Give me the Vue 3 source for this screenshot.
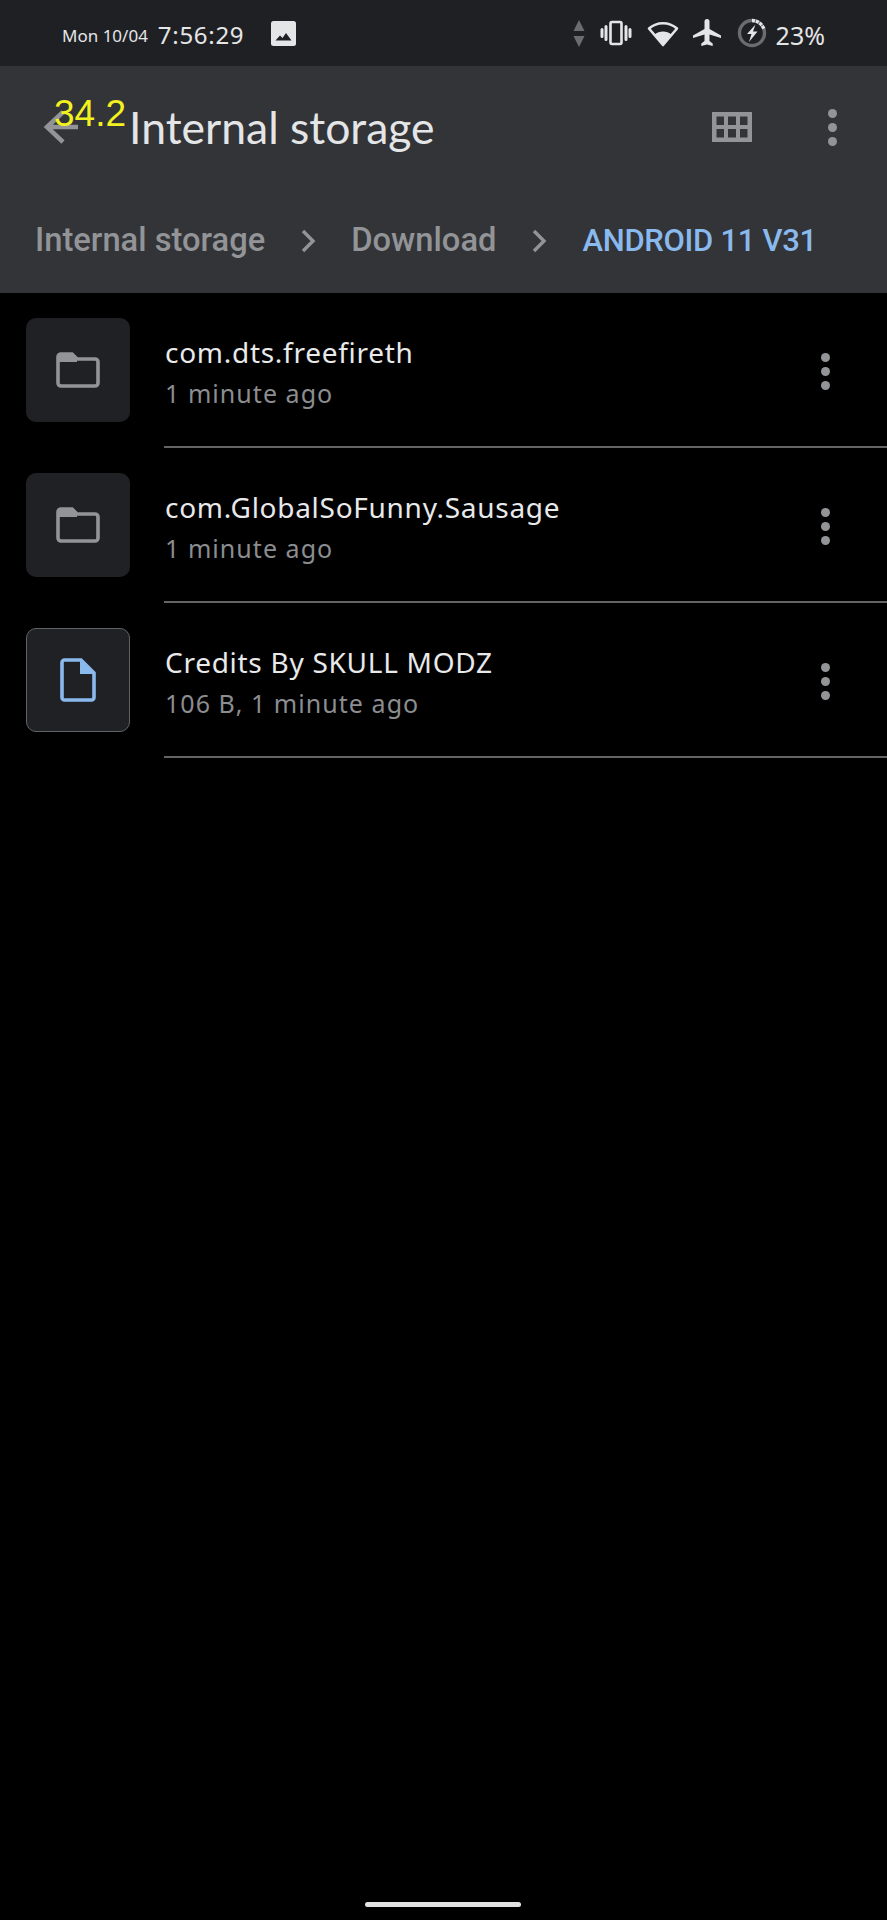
<template>
  <div class="screen">
    <div class="status-bar">
      <div class="status-left">
        <span class="date">Mon 10/04</span>
        <span class="clock">7:56:29</span>
        <svg class="pic" viewBox="0 0 25 25" width="25" height="25">
          <rect width="25" height="25" rx="2.5" fill="#e4e5e7" />
          <path d="M4.5 19.5l4.5-5 2.5 2.5 3.5-5 5.5 7.5z" fill="#1f2024" />
        </svg>
      </div>
      <div class="status-right">
        <svg class="updown" viewBox="0 0 12 27" width="12" height="27">
          <path d="M6 0l5.5 11H.5zM6 27L.5 16h11z" fill="#6a6c70" />
        </svg>
        <svg class="vibrate" viewBox="0 0 32 26" width="32" height="26">
          <rect x="10.5" y="2" width="11" height="22" rx="1.5" fill="none" stroke="#e4e5e7" stroke-width="2.6" />
          <path d="M6 6.5v13M2 9.5v7M26 6.5v13M30 9.5v7" stroke="#e4e5e7" stroke-width="3" stroke-linecap="round" />
        </svg>
        <svg class="wifi" viewBox="0 0 32 28" width="32" height="28">
          <path d="M16 26L2 9.5C10 2.5 22 2.5 30 9.5z" fill="none" stroke="#e4e5e7" stroke-width="2.6" stroke-linejoin="round" />
          <path d="M16 26L7.5 15.5C12 11.5 20 11.5 24.5 15.5z" fill="#e4e5e7" />
        </svg>
        <svg viewBox="0 0 28 28" width="28" height="28">
          <path d="M28 19v-2.6L16.5 10V2.500a2.500 2.500 0 0 0-5 0V10L0 16.400V19l11.500-3.400V22l-3.200 2.400V27l5.700-1.600 5.700 1.600v-2.600L16.500 22v-6.400z" fill="#e4e5e7" />
        </svg>
        <svg viewBox="0 0 30 30" width="30" height="30">
          <circle cx="15" cy="15" r="12.5" fill="none" stroke="#6a6c70" stroke-width="3.4" />
          <path d="M15 2.5A12.5 12.5 0 0 1 27 11.5" fill="none" stroke="#e4e5e7" stroke-width="3.4" stroke-dasharray="3 1" />
          <path d="M18.500 6.500l-8.500 9.500h4.500l-2.500 8 8.500-10.500h-4.500z" fill="#e4e5e7" />
        </svg>
        <span class="battery">23%</span>
      </div>
    </div>

    <header class="toolbar">
      <div class="toolbar-top">
        <svg class="back" viewBox="0 0 36 36" width="36" height="36">
          <path d="M21 3L5 18l16 15M5 18h31" fill="none" stroke="#929497" stroke-width="4.500" />
        </svg>
        <h1>Internal storage</h1>
        <span class="fps">34.2</span>
        <svg class="grid-icon" viewBox="0 0 40 30" width="40" height="30">
          <path fill-rule="evenodd" d="M0 0h40v30H0zM4.500 4.500v8.500h7.500V4.500zm11.500 0v8.500h8V4.500zm12 0v8.500h7.500V4.500zM4.500 17v8.500h7.500V17zm11.500 0v8.500h8V17zm12 0v8.500h7.500V17z" fill="#929497" />
        </svg>
        <span class="dots big"><i></i><i></i><i></i></span>
      </div>
      <nav class="crumbs">
        <template v-for="(crumb, i) in crumbs" :key="crumb">
          <svg v-if="i" class="chevron" viewBox="0 0 16 24" width="16" height="24">
            <path d="M3 2l10 10L3 22" fill="none" stroke="#929497" stroke-width="3.400" />
          </svg>
          <span :class="{ current: i === crumbs.length - 1 }">{{ crumb }}</span>
        </template>
      </nav>
    </header>

    <ul class="files">
      <li v-for="file in files" :key="file.name" class="file-row">
        <div class="thumb" :class="{ selected: file.doc }">
          <svg v-if="file.doc" viewBox="0 0 36 44" width="36" height="44">
            <path d="M2 4.500a2.500 2.500 0 0 1 2.500-2.500H21l13 13v24.500a2.500 2.500 0 0 1-2.500 2.500H4.500A2.500 2.500 0 0 1 2 39.500z" fill="none" stroke="#8ab9ee" stroke-width="3.600" />
            <path d="M20 2l14 14H20z" fill="#8ab9ee" />
          </svg>
          <svg v-else viewBox="0 0 44 36" width="44" height="36">
            <path d="M2 5a3 3 0 0 1 3-3h11l5 5h18a3 3 0 0 1 3 3v21a3 3 0 0 1-3 3H5a3 3 0 0 1-3-3z" fill="none" stroke="#929497" stroke-width="3.600" />
            <path d="M2 5a3 3 0 0 1 3-3h11l5 5v3H2z" fill="#929497" />
          </svg>
        </div>
        <div class="info">
          <div class="name">{{ file.name }}</div>
          <div class="meta">{{ file.meta }}</div>
        </div>
        <span class="dots"><i></i><i></i><i></i></span>
      </li>
    </ul>

    <div class="home-bar"></div>
  </div>
</template>

<script setup>
const crumbs = ['Internal storage', 'Download', 'ANDROID 11 V31'];
const files = [
  { name: 'com.dts.freefireth', meta: '1 minute ago' },
  { name: 'com.GlobalSoFunny.Sausage', meta: '1 minute ago' },
  { name: 'Credits By SKULL MODZ', meta: '106 B, 1 minute ago', doc: true },
];
</script>

<style>
html, body { margin: 0; background: #000; }
</style>

<style scoped>
.screen {
  position: relative;
  width: 887px;
  height: 1920px;
  display: flex;
  flex-direction: column;
  background: #000;
  font-family: "Noto Sans", sans-serif;
  overflow: hidden;
}
.status-bar {
  height: 66px;
  flex: none;
  display: flex;
  align-items: center;
  justify-content: space-between;
  padding: 0 62px;
  box-sizing: border-box;
  background: #1f2024;
  color: #e4e5e7;
}
.status-left, .status-right { display: flex; align-items: center; }
.date { font-size: 17px; margin: 5px 10px 0 0; }
.clock { font-size: 24px; letter-spacing: 0.7px; margin: 3px 27px 0 0; }
.pic { margin-top: 1px; }
.status-right { gap: 16px; }
.updown { margin-right: -1px; }
.vibrate { margin-right: -1px; }
.wifi { margin-right: -2px; }
.battery { font-size: 25px; margin: 3px 0 0 -7px; }
.toolbar {
  height: 227px;
  flex: none;
  background: #323438;
  box-sizing: border-box;
}
.toolbar-top {
  position: relative;
  height: 76px;
  margin-top: 23px;
  padding: 0 50px 0 42px;
  display: flex;
  align-items: center;
}
.back { margin-right: 51px; flex: none; }
h1 {
  flex: 1;
  margin: 0;
  font: 400 44.5px/1 Lato, sans-serif;
  color: #e4e5e7;
}
.fps {
  position: absolute;
  left: 54px;
  top: 6px;
  font: 400 37px/1 "Liberation Sans", sans-serif;
  color: #f2f21e;
}
.grid-icon { margin-right: 76px; flex: none; }
.dots { display: flex; flex-direction: column; gap: 5px; flex: none; }
.dots i { width: 9px; height: 9px; border-radius: 50%; background: #929497; }
.crumbs {
  display: flex;
  align-items: center;
  margin-top: 56px;
  padding-left: 35px;
  font: 500 32.7px/1.2 Roboto, sans-serif;
  color: #929497;
}
.chevron { margin: 0 35px; flex: none; }
.current { color: #8ab9ee; font-size: 31px; letter-spacing: -0.3px; }
.files { list-style: none; margin: 0; padding: 0; }
.file-row {
  position: relative;
  height: 155px;
  display: flex;
  align-items: flex-start;
  padding: 25px 57px 0 26px;
  box-sizing: border-box;
}
.file-row::after {
  content: "";
  position: absolute;
  left: 164px;
  right: 0;
  bottom: 0;
  height: 2px;
  background: #636466;
}
.thumb {
  width: 104px;
  height: 104px;
  flex: none;
  box-sizing: border-box;
  display: flex;
  align-items: center;
  justify-content: center;
  border-radius: 10px;
  background: #202124;
}
.thumb.selected { border: 1px solid #5f6368; }
.info { flex: 1; margin-left: 35px; padding-top: 14px; }
.name { font-size: 28px; line-height: 40px; letter-spacing: 0.72px; color: #e8e9ea; }
.meta { font-size: 25px; line-height: 36px; letter-spacing: 1.05px; color: #8b8d90; margin-top: 3px; }
.file-row .dots { margin-top: 35px; }
.home-bar {
  position: absolute;
  left: 365px;
  top: 1902px;
  width: 156px;
  height: 5px;
  border-radius: 3px;
  background: #e2e2e2;
}
</style>
